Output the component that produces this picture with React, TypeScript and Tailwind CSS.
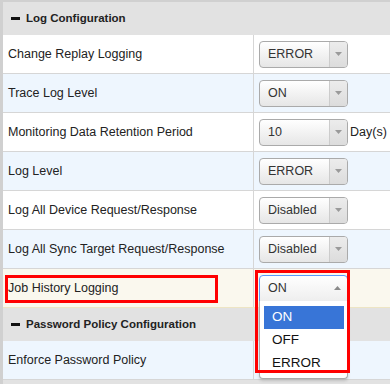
import React from "react";

type Row = { label: string; value: string; bg: string; suffix?: string };

const rows: Row[] = [
  { label: "Change Replay Logging", value: "ERROR", bg: "bg-white" },
  { label: "Trace Log Level", value: "ON", bg: "bg-[#eef6fe]" },
  { label: "Monitoring Data Retention Period", value: "10", bg: "bg-white", suffix: "Day(s)" },
  { label: "Log Level", value: "ERROR", bg: "bg-[#eef6fe]" },
  { label: "Log All Device Request/Response", value: "Disabled", bg: "bg-white" },
  { label: "Log All Sync Target Request/Response", value: "Disabled", bg: "bg-[#eef6fe]" },
];

function DownTri() {
  return (
    <svg width="7" height="4" viewBox="0 0 7 4">
      <path d="M0 0 L7 0 L3.5 4 Z" fill="#9a9a9a" />
    </svg>
  );
}

function UpTri() {
  return (
    <svg width="7" height="4" viewBox="0 0 7 4">
      <path d="M0 4 L7 4 L3.5 0 Z" fill="#8a8a8a" />
    </svg>
  );
}

function Select({ value }: { value: string }) {
  return (
    <div className="flex h-[27px] w-[89px] overflow-hidden rounded-[4px] border border-[#aaaaaa] bg-linear-to-b from-white to-[#e6e6e6]">
      <div className="flex flex-1 items-center pl-[8px] text-[12.5px] text-[#333]">{value}</div>
      <div className="flex w-[18px] items-center justify-center border-l border-[#cccccc] bg-linear-to-b from-[#ececec] to-[#dcdcdc]">
        <DownTri />
      </div>
    </div>
  );
}

function Header({ title }: { title: string }) {
  return (
    <div className="flex h-[33px] items-center gap-[6px] bg-[#e2e2e2] pl-[8px]">
      <div className="h-[3px] w-[9px] bg-[#111]" />
      <span className="text-[11.5px] font-bold text-[#222]">{title}</span>
    </div>
  );
}

export default function App() {
  return (
    <div
      className="h-[384px] w-[390px] overflow-hidden bg-white"
      style={{ fontFamily: '"Liberation Sans", Arial, sans-serif' }}
    >
      <div className="border-l-[3px] border-t-2 border-[#d0d0d0]">
        <Header title="Log Configuration" />
        {rows.map((r) => (
          <div key={r.label} className={`flex h-[39px] border-b border-[#d6d6d6] ${r.bg}`}>
            <div className="flex w-[251px] items-center border-r border-[#d6d6d6] pl-[5px] text-[12.5px] text-[#222]">
              {r.label}
            </div>
            <div className="flex items-center gap-[2px] pl-[5px]">
              <Select value={r.value} />
              {r.suffix && <span className="text-[12.5px] text-[#222]">{r.suffix}</span>}
            </div>
          </div>
        ))}
        {/* Job History Logging row */}
        <div className="relative z-10 flex h-[39px] border-b border-[#ede5c4] bg-[#faf8ee]">
          <div className="relative flex w-[251px] items-center border-r border-[#d6d6d6] pl-[5px] text-[12.5px] text-[#222]">
            Job History Logging
            <div className="pointer-events-none absolute left-[2px] top-[6px] h-[28px] w-[213px] border-[3px] border-[#ff0000]" />
          </div>
          <div className="relative flex items-center pl-[5px]">
            <div className="relative">
              <div className="flex h-[27px] w-[89px] items-center justify-between rounded-t-[4px] border border-[#5897fb] bg-linear-to-b from-white to-[#eeeeee] pl-[8px] pr-[6px] text-[12.5px] text-[#333]">
                <span>ON</span>
                <UpTri />
              </div>
              <div className="absolute left-0 top-[26px] h-[78px] w-[89px] rounded-b-[4px] border border-t-0 border-[#aaaaaa] bg-white pt-[5px] text-[13.5px] text-[#111] shadow-[0_2px_3px_rgba(0,0,0,0.15)]">
                <div className="mx-[4px] flex h-[23px] w-[80px] items-center bg-[#3875d7] pl-[8px] text-white">ON</div>
                <div className="mx-[4px] flex h-[23px] w-[80px] items-center pl-[8px]">OFF</div>
                <div className="mx-[4px] flex h-[23px] w-[80px] items-center pl-[8px]">ERROR</div>
              </div>
            </div>
            <div className="pointer-events-none absolute left-[1px] top-[1px] z-20 h-[103px] w-[95px] border-[3px] border-[#ff0000]" />
          </div>
        </div>
        <Header title="Password Policy Configuration" />
        <div className="flex h-[39px] border-b border-[#d6d6d6] bg-[#eef6fe]">
          <div className="flex w-[251px] items-center border-r border-[#d6d6d6] pl-[5px] text-[12.5px] text-[#222]">
            Enforce Password Policy
          </div>
          <div className="flex items-center pl-[5px]" />
        </div>
        <div className="h-[33px] bg-[#e2e2e2]" />
      </div>
    </div>
  );
}
